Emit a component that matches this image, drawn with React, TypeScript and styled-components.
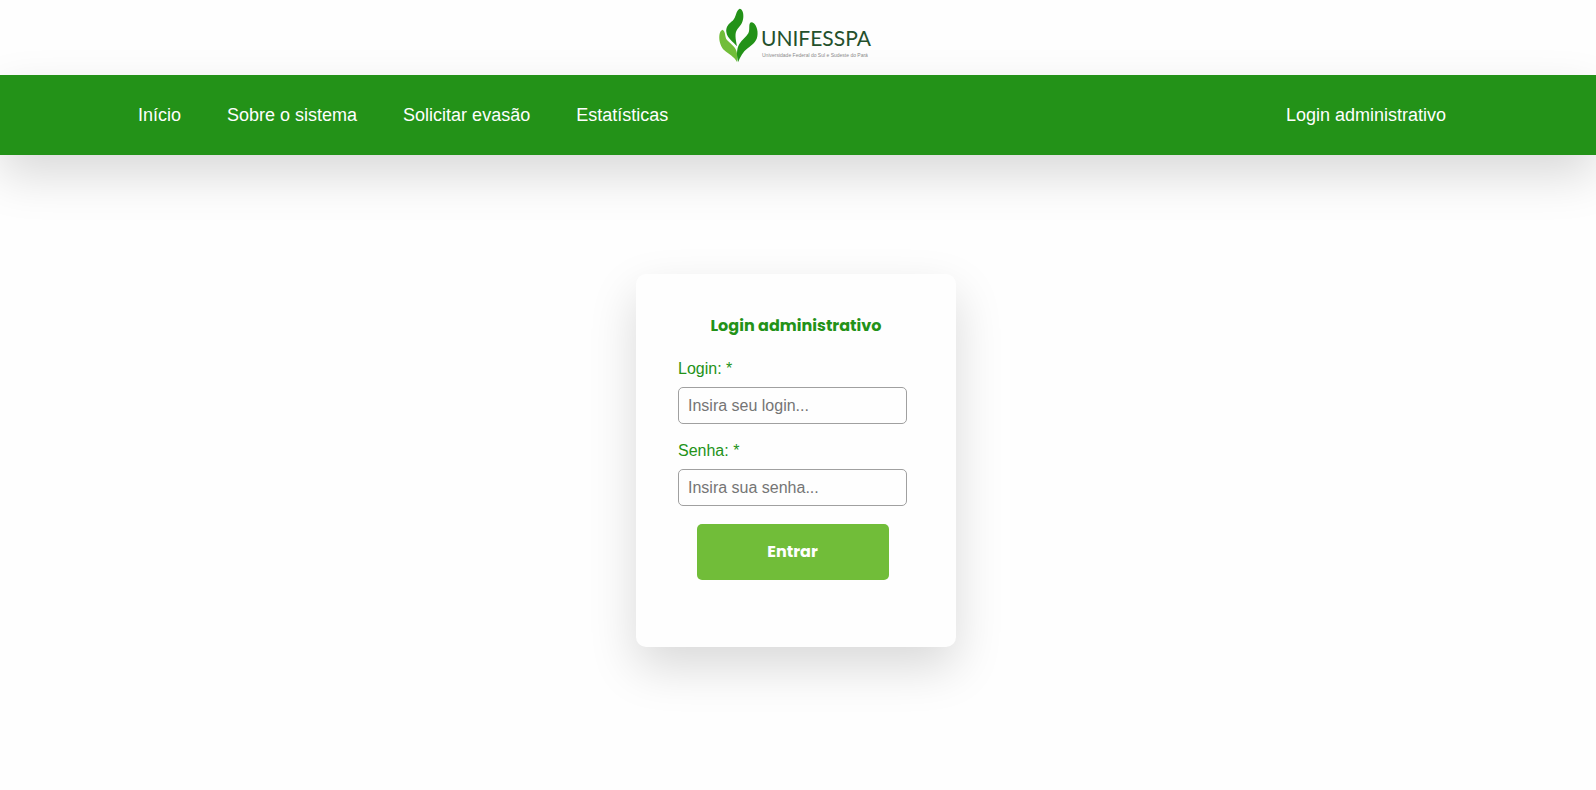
import React from "react";
import styled, { createGlobalStyle } from "styled-components";

const green = "#239218";
const lime = "#71bd39";
const shadow = "0 20px 48px rgba(0, 0, 0, 0.15)";

const GlobalStyle = createGlobalStyle`
  * { box-sizing: border-box; }
  body {
    margin: 0;
    background: #fefefe;
    font-family: "Liberation Sans", Arial, sans-serif;
    font-size: 16px;
  }
`;

const Header = styled.header`
  display: flex;
  justify-content: center;
  padding: 8px 4px 11px 0;
`;

const LogoDrawing = styled.svg`
  display: block;
  width: 154px;
  height: 56px;
`;

const LogoName = styled.text`
  font-family: Lato, "Liberation Sans", sans-serif;
  font-size: 21px;
  font-weight: 400;
  fill: #24502c;
`;

const LogoSubtitle = styled.text`
  font-family: "Liberation Sans", sans-serif;
  font-size: 5px;
  fill: #8a8a8a;
`;

const Nav = styled.nav`
  display: flex;
  align-items: center;
  justify-content: space-between;
  min-height: 80px;
  padding: 0 150px 0 138px;
  background: ${green};
  box-shadow: ${shadow};
`;

const NavList = styled.ul`
  display: flex;
  gap: 46px;
  margin: 0;
  padding: 0;
  list-style: none;
`;

const NavLink = styled.a`
  color: #fefefe;
  font-size: 18px;
  line-height: 24px;
  text-decoration: none;
`;

const Main = styled.main`
  display: flex;
  justify-content: center;
  padding: 119px 4px 120px 0;
`;

const Card = styled.form`
  display: flex;
  flex-direction: column;
  width: 320px;
  padding: 40px 49px 67px 42px;
  border-radius: 10px;
  background: #fefefe;
  box-shadow: ${shadow};
`;

const Title = styled.h1`
  margin: 0 -7px 22px 0;
  color: ${green};
  font: bold 16px/24px Poppins, Inter, sans-serif;
  text-align: center;
`;

const Field = styled.div`
  display: flex;
  flex-direction: column;
  gap: 9px;
  margin-bottom: 18px;
`;

const Label = styled.label`
  color: ${green};
  line-height: 18px;
`;

const Input = styled.input`
  width: 100%;
  height: 37px;
  padding: 0 9px;
  border: 1px solid #a0a0a0;
  border-radius: 5px;
  background: #fefefe;
  font: 16px "Liberation Sans", Arial, sans-serif;
  &::placeholder { color: #757575; }
`;

const Submit = styled.button`
  align-self: center;
  width: 192px;
  height: 56px;
  border: 0;
  border-radius: 5px;
  background: ${lime};
  color: #fefefe;
  font: bold 16px/24px Poppins, Inter, sans-serif;
  cursor: pointer;
`;

const Logo = () => (
  <LogoDrawing viewBox="0 0 154 56" role="img" aria-label="Unifesspa">
    <g transform="translate(-9 -8) scale(0.33333)">
      <path fill={green} d="M89 26 C97 27 101 38 100 51 C99 69 90 78 82 88 C74 99 76 114 81 139 C70 126 51 114 49 96 C47 80 57 70 68 62 C79 52 77 32 89 26Z" />
      <path fill={green} d="M123 67 C137 67 146 91 142 109 C139 127 124 137 113 145 C99 155 91 171 84 187 C80 167 79 147 88 132 C96 119 108 112 115 100 C121 89 114 71 123 67Z" />
      <path fill={lime} d="M37 89 C48 93 43 109 51 120 C63 133 79 142 81 160 L81 186 C72 169 57 164 43 151 C29 138 23 110 32 94Z" />
    </g>
    <LogoName x="42" y="38">UNIFESSPA</LogoName>
    <LogoSubtitle x="43" y="49">Universidade Federal do Sul e Sudeste do Pará</LogoSubtitle>
  </LogoDrawing>
);

const links = ["Início", "Sobre o sistema", "Solicitar evasão", "Estatísticas"];

export default function App() {
  return (
    <>
      <GlobalStyle />
      <Header>
        <Logo />
      </Header>
      <Nav>
        <NavList>
          {links.map((link) => (
            <li key={link}>
              <NavLink href="#">{link}</NavLink>
            </li>
          ))}
        </NavList>
        <NavLink href="#">Login administrativo</NavLink>
      </Nav>
      <Main>
        <Card onSubmit={(event: React.FormEvent) => event.preventDefault()}>
          <Title>Login administrativo</Title>
          <Field>
            <Label htmlFor="login">Login: *</Label>
            <Input id="login" type="text" placeholder="Insira seu login..." />
          </Field>
          <Field>
            <Label htmlFor="senha">Senha: *</Label>
            <Input id="senha" type="password" placeholder="Insira sua senha..." />
          </Field>
          <Submit type="submit">Entrar</Submit>
        </Card>
      </Main>
    </>
  );
}
